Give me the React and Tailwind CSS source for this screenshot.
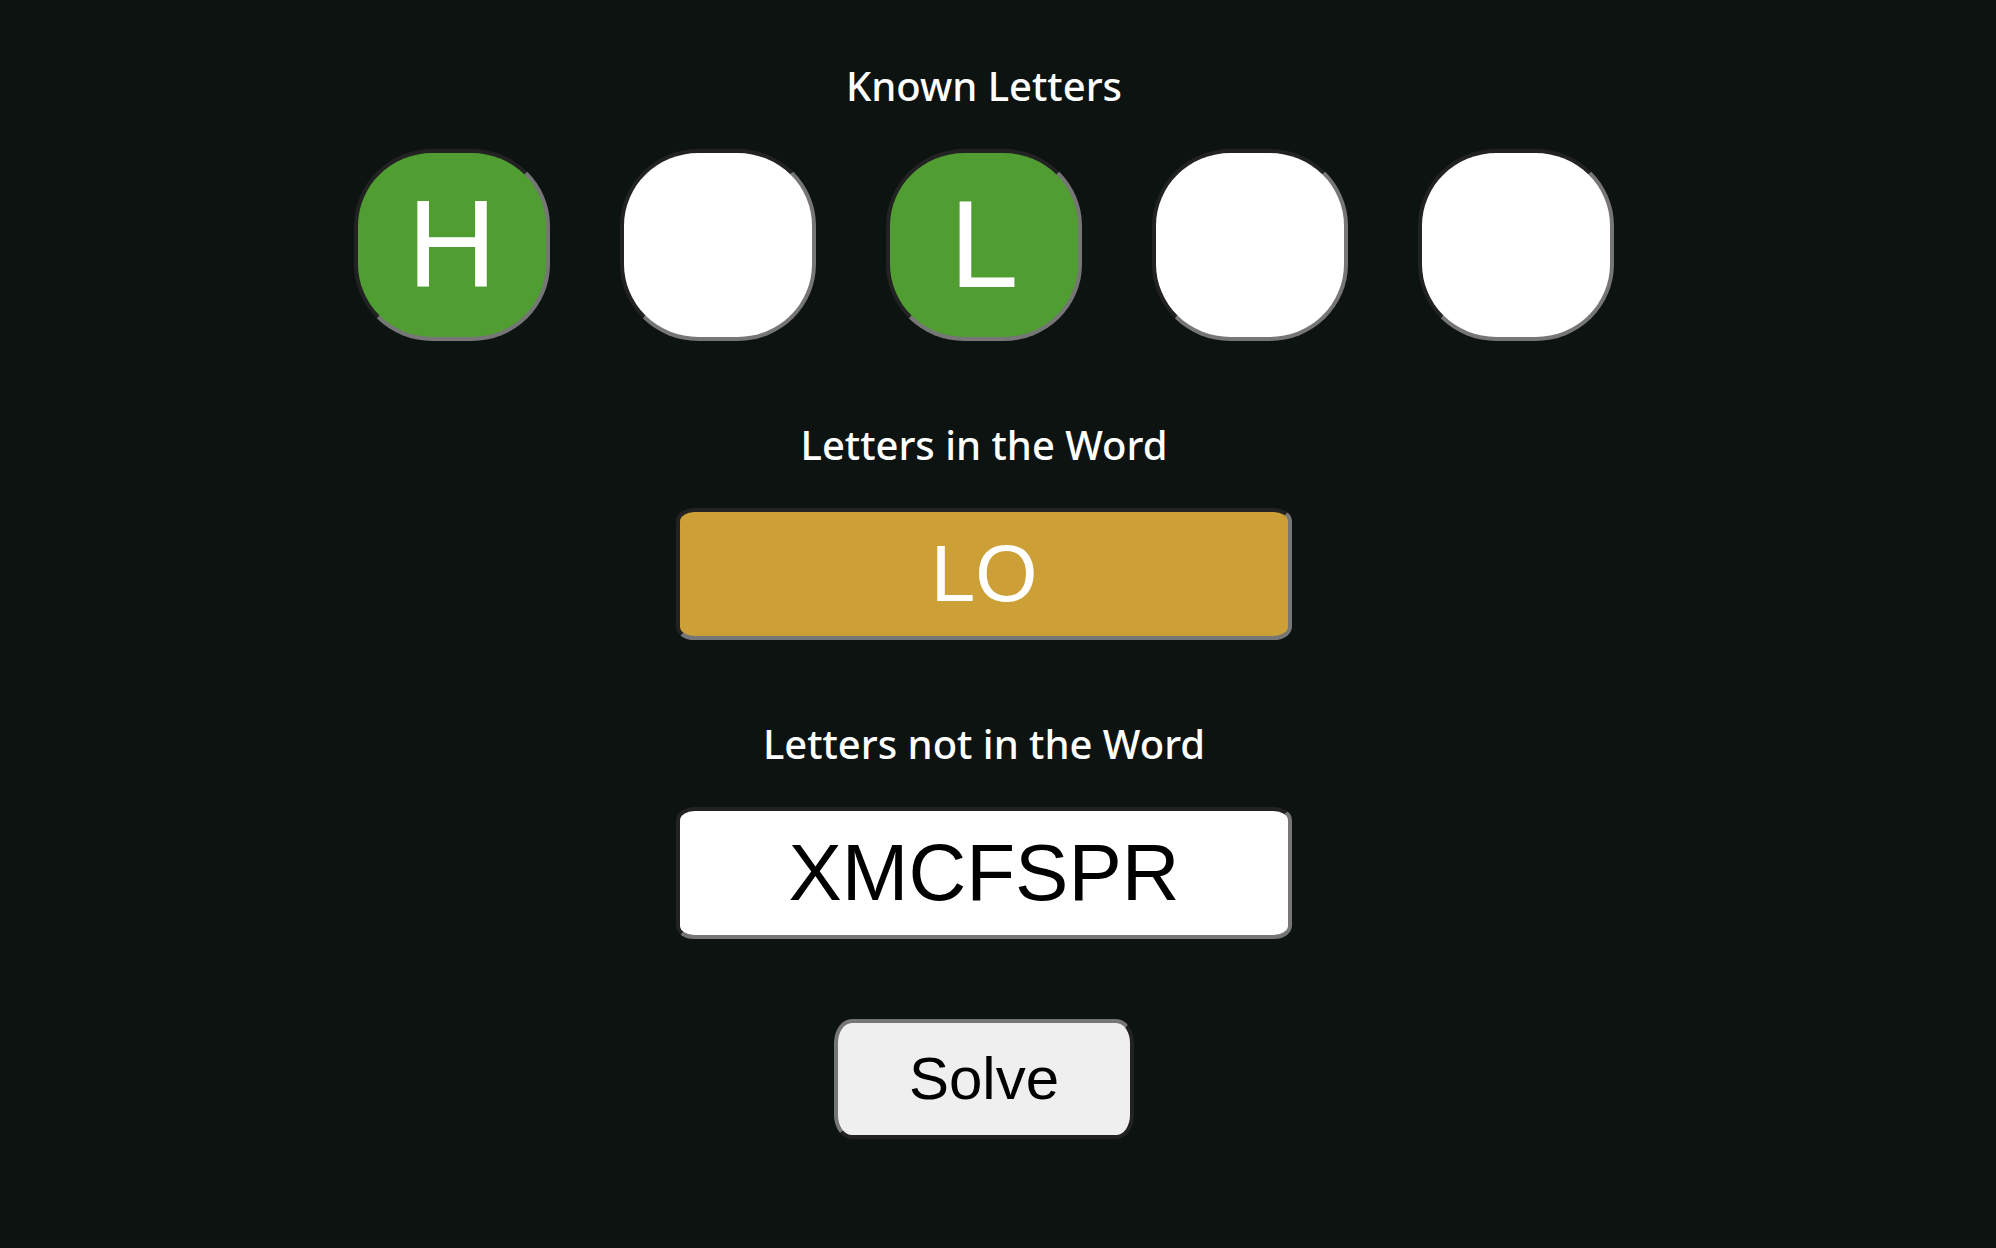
import { useState } from "react";

const labelClass =
  "block font-['Noto_Sans','Open_Sans',sans-serif] text-[40px] leading-[56px] font-medium text-white";

const insetBorder =
  "border-4 border-t-[#222] border-l-[#222] border-r-[#767676] border-b-[#767676]";

const wideInput =
  "h-[132px] w-[616px] max-w-full rounded-[3%/10%] text-center font-['Liberation_Sans',Arial,sans-serif] text-[80px] uppercase outline-none";

function LetterInput({ value, position, onChange }) {
  return (
    <input
      type="text"
      maxLength={1}
      value={value}
      onChange={(e) => onChange(e.target.value)}
      aria-label={`Letter ${position}`}
      className={`h-48 w-[196px] min-w-0 rounded-[40%] pb-0.5 text-center font-['Liberation_Sans',Arial,sans-serif] text-[124px] text-white uppercase outline-none ${insetBorder} ${
        value ? "bg-[#509d31]" : "bg-white"
      }`}
    />
  );
}

export default function App() {
  const [known, setKnown] = useState(["H", "", "L", "", ""]);
  const [included, setIncluded] = useState("LO");
  const [excluded, setExcluded] = useState("XMCFSPR");

  const setLetter = (index, letter) =>
    setKnown(known.map((old, i) => (i === index ? letter : old)));

  return (
    <main className="min-h-screen bg-[#0d1311] pt-[58px] pr-7">
      <form
        className="flex flex-col items-center"
        onSubmit={(e) => e.preventDefault()}
      >
        <section className="flex flex-col items-center gap-[35px]">
          <h2 className={labelClass}>Known Letters</h2>
          <div className="flex justify-center gap-[70px]">
            {known.map((letter, i) => (
              <LetterInput
                key={i}
                value={letter}
                position={i + 1}
                onChange={(v) => setLetter(i, v)}
              />
            ))}
          </div>
        </section>

        <section className="mt-[76px] flex flex-col items-center gap-[35px]">
          <label htmlFor="included" className={labelClass}>
            Letters in the Word
          </label>
          <input
            id="included"
            type="text"
            value={included}
            onChange={(e) => setIncluded(e.target.value)}
            className={`bg-[#cca037] text-white ${wideInput} ${insetBorder}`}
          />
        </section>

        <section className="mt-[76px] flex flex-col items-center gap-[35px]">
          <label htmlFor="excluded" className={labelClass}>
            Letters not in the Word
          </label>
          <input
            id="excluded"
            type="text"
            value={excluded}
            onChange={(e) => setExcluded(e.target.value)}
            className={`bg-white text-black ${wideInput} ${insetBorder}`}
          />
        </section>

        <button
          type="submit"
          className="mt-20 h-[120px] w-[300px] rounded-[6%/20%] border-4 border-t-[#767676] border-r-[#222] border-b-[#222] border-l-[#767676] bg-[#efefef] font-['Liberation_Sans',Arial,sans-serif] text-[60px] text-black"
        >
          Solve
        </button>
      </form>
    </main>
  );
}
